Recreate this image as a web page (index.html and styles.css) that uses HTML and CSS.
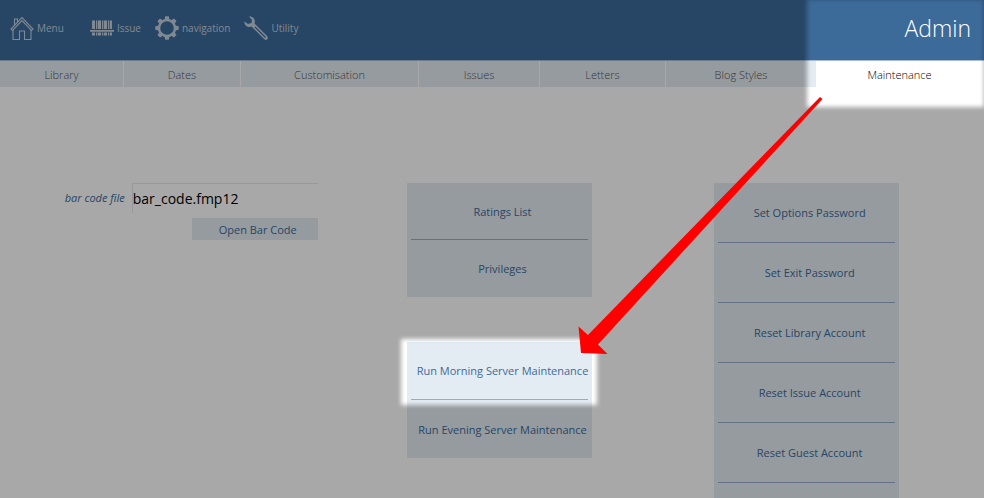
FILE: index.html
```html
<!DOCTYPE html>
<html lang="en">
<head>
<meta charset="utf-8">
<title>Admin - Maintenance</title>
<link rel="stylesheet" href="styles.css">
</head>
<body>
<header class="topbar">
  <nav class="tools">
    <a class="tool tool-menu" href="#">
      <svg class="icon" viewBox="0 0 24 24" fill="none" stroke="currentColor" stroke-width="1.1"><path d="M1 13 12 1.500 23 13 21.500 14.500 12 4.500 2.500 14.500Z"/><path d="M4.500 9.500V3H7.500V6M3 14V23.500H9.500V15H14.500V23.500H21V14"/></svg>
      Menu</a>
    <a class="tool tool-issue" href="#">
      <svg class="icon" viewBox="0 0 24 24" fill="currentColor"><path d="M2 4.500h3v8.500H2zM6 4.500h1v8.500H6zM7.700 4.500h3.300v8.500H7.700zM12 4.500h1v8.500h-1zM13.700 4.500h3.300v8.500h-3.300zM18 4.500h1.300v8.500H18zM20 4.500h2v8.500h-2zM0 14h24v1.700H0zM2 16.500h3v3H2zM6 16.500h1v3H6zM7.700 16.500h3.300v3H7.700zM12 16.500h1v3h-1zM13.700 16.500h3.300v3h-3.300zM18 16.500h1.300v3H18zM20 16.500h2v3h-2z"/></svg>
      Issue</a>
    <a class="tool tool-navigation" href="#">
      <svg class="icon" viewBox="0 0 24 24"><circle cx="12" cy="12" r="8" fill="none" stroke="currentColor" stroke-width="2.400"/><g fill="currentColor"><path id="tooth" d="M9.500 4 10.200 0.300H13.800L14.500 4Z"/><use href="#tooth" transform="rotate(45 12 12)"/><use href="#tooth" transform="rotate(90 12 12)"/><use href="#tooth" transform="rotate(135 12 12)"/><use href="#tooth" transform="rotate(180 12 12)"/><use href="#tooth" transform="rotate(225 12 12)"/><use href="#tooth" transform="rotate(270 12 12)"/><use href="#tooth" transform="rotate(315 12 12)"/></g></svg>
      navigation</a>
    <a class="tool tool-utility" href="#">
      <svg class="icon" viewBox="0 0 24 24"><path fill="currentColor" d="M5 0.500C9 0 12 3.500 10.500 7.500L23.300 20.300C25 22.500 22.500 25 20.300 23.300L7.500 10.500C3.500 12 0 9 .5 5.500L4 8 7.500 7 8 4Z"/><path class="slot" d="M11 11 21.500 21.500"/></svg>
      Utility</a>
  </nav>
  <h1 class="title">Admin</h1>
</header>
<nav class="tabs">
  <a class="tab" href="#">Library</a>
  <a class="tab" href="#">Dates</a>
  <a class="tab" href="#">Customisation</a>
  <a class="tab" href="#">Issues</a>
  <a class="tab" href="#">Letters</a>
  <a class="tab" href="#">Blog Styles</a>
  <a class="tab tab-active" href="#" aria-current="page">Maintenance</a>
</nav>
<main class="content">
  <form class="barcode">
    <label class="barcode-label" for="barcode-file">bar code file</label>
    <input class="barcode-input" id="barcode-file" type="text" value="bar_code.fmp12">
    <button class="barcode-open" type="button">Open Bar Code</button>
  </form>
  <div class="column column-middle">
    <section class="panel">
      <button class="action" type="button">Ratings List</button>
      <button class="action" type="button">Privileges</button>
    </section>
    <section class="panel panel-server">
      <button class="action" type="button">Run Morning Server Maintenance</button>
      <button class="action" type="button">Run Evening Server Maintenance</button>
    </section>
  </div>
  <div class="column column-right">
    <section class="panel panel-tall">
      <button class="action" type="button">Set Options Password</button>
      <button class="action" type="button">Set Exit Password</button>
      <button class="action" type="button">Reset Library Account</button>
      <button class="action" type="button">Reset Issue Account</button>
      <button class="action" type="button">Reset Guest Account</button>
    </section>
  </div>
</main>
<svg class="annotation" aria-hidden="true">
  <defs>
    <filter id="soften" x="-10%" y="-10%" width="120%" height="120%"><feGaussianBlur stdDeviation="2"/></filter>
    <mask id="spotlights">
      <rect width="100%" height="100%" fill="white"/>
      <g filter="url(#soften)">
        <rect x="807" y="-1" width="177" height="108"/>
        <rect x="401" y="339" width="196" height="66"/>
      </g>
    </mask>
  </defs>
  <rect width="100%" height="100%" fill-opacity="0.34" mask="url(#spotlights)"/>
  <path class="arrow" d="M820 97 822.500 99 598 344.500 607.500 354 581 353 578.500 326.500 588 335Z"/>
</svg>
</body>
</html>
```
FILE: styles.css
```css
* {
  box-sizing: border-box;
}

body {
  margin: 0;
  height: 100vh;
  display: flex;
  flex-direction: column;
  overflow: hidden;
  background: #fff;
  color: #3c6a99;
  font-family: "Open Sans", sans-serif;
  font-size: 11px;
}

a {
  color: inherit;
  text-decoration: none;
}

button,
input {
  font: inherit;
  color: inherit;
  border: 0;
  border-radius: 0;
  padding: 0;
}

.topbar {
  display: flex;
  justify-content: space-between;
  align-items: center;
  height: 61px;
  padding: 0 13px 4px 10px;
  background: #3c6a99;
  border-bottom: 1px solid #a8bbd0;
}

.tools {
  display: flex;
  color: #c3d0de;
  font-size: 10px;
}

.tool {
  display: flex;
  align-items: center;
  gap: 3px;
}

.tool-issue {
  margin-left: 26px;
}

.tool-navigation,
.tool-utility {
  margin-left: 14px;
}

.icon {
  width: 24px;
  height: 24px;
}

.slot {
  fill: none;
  stroke: #3c6a99;
  stroke-width: 1.2;
}

.title {
  margin: 0;
  color: #fff;
  font-size: 23px;
  font-weight: 300;
}

.tabs {
  display: grid;
  grid-template-columns: 124fr 117fr 178fr 121fr 126fr 150fr 168fr;
}

.tab {
  height: 26px;
  line-height: 28px;
  text-align: center;
  background: #e4ecf2;
  color: #505357;
  border-right: 1px solid #fff;
  font-weight: 300;
}

.tab:nth-child(6) {
  border-right: 0;
}

.tab-active {
  background: #fff;
  color: #000;
}

.content {
  flex: 1;
  min-height: 0;
  display: grid;
  grid-template-columns: 318fr 89fr 185fr 122fr 185fr 85fr;
  padding-top: 96px;
}

.barcode {
  display: grid;
  grid-template-columns: 1fr 186px;
  gap: 5px 7px;
  align-content: start;
}

.barcode-label {
  text-align: right;
  line-height: 30px;
  font-style: italic;
}

.barcode-input {
  width: 100%;
  height: 30px;
  background: transparent;
  border-top: 1px solid #e4e7ea;
  border-left: 1px solid #e4e7ea;
  color: #000;
  font-size: 14px;
}

.barcode-open {
  grid-column: 2;
  justify-self: end;
  width: 126px;
  height: 22px;
  padding-left: 6px;
  background: #e4ecf2;
}

.column {
  display: flex;
  flex-direction: column;
  gap: 45px;
  min-height: 0;
}

.column-middle {
  grid-column: 3;
}

.column-right {
  grid-column: 5;
}

.panel {
  display: flex;
  flex-direction: column;
  padding: 0 4px;
  background: #e4ecf3;
}

.action {
  flex: none;
  height: 57px;
  padding-left: 6px;
  background: transparent;
  border-bottom: 1px solid #98acc8;
  white-space: nowrap;
}

.action:last-child {
  border-bottom: 0;
}

.panel-server .action {
  height: 58px;
}

.panel-tall {
  flex: 1;
}

.panel-tall .action {
  height: 60px;
  border-bottom: 1px solid #98acc8;
}

.annotation {
  position: absolute;
  inset: 0;
  width: 100%;
  height: 100%;
  pointer-events: none;
}

.arrow {
  fill: #f00;
}
```
